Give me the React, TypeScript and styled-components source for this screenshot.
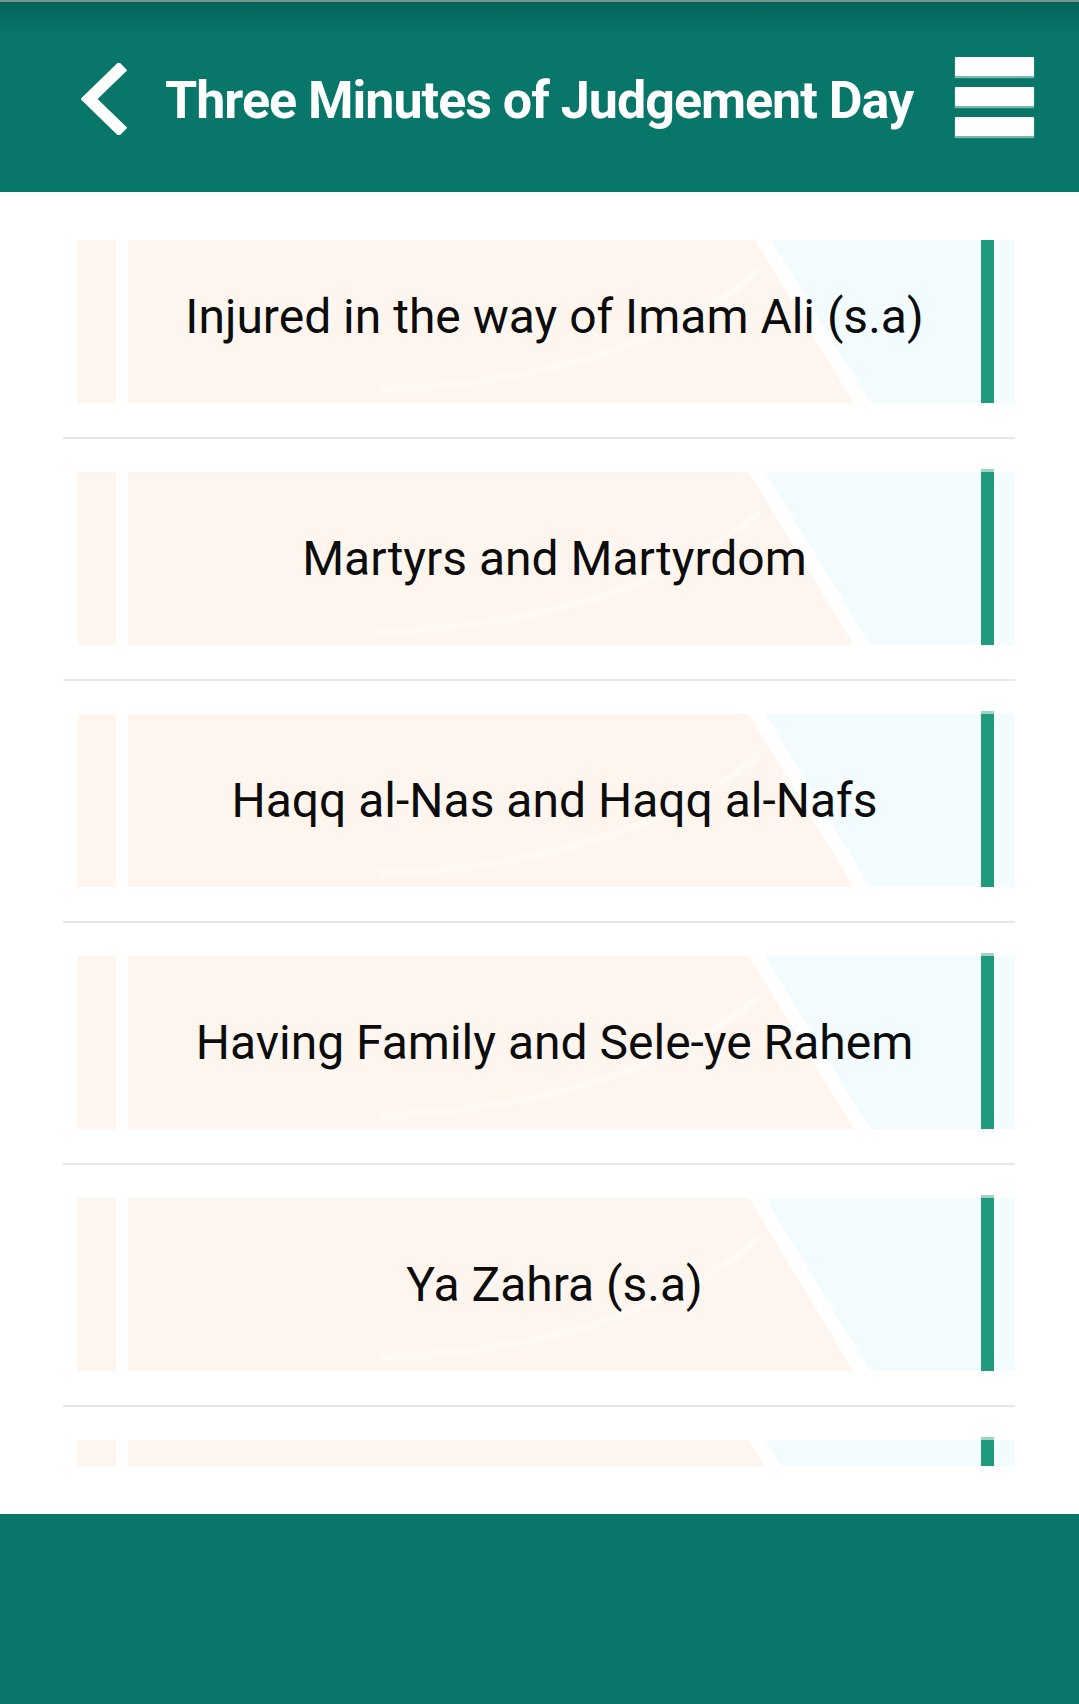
import styled, { createGlobalStyle } from "styled-components";

const GlobalStyle = createGlobalStyle`
    html, body {
        margin: 0;
        padding: 0;
    }
    body {
        font-family: Roboto, "Noto Sans", "Liberation Sans", sans-serif;
        background: #ffffff;
    }
`;

const Page = styled.div`
    display: flex;
    flex-direction: column;
    width: 1079px;
    height: 1704px;
    overflow: hidden;
`;

const Header = styled.header`
    display: flex;
    align-items: center;
    height: 192px;
    padding: 0 45px 0 81px;
    box-sizing: border-box;
    border-top: 2px solid #7d9190;
    background: linear-gradient(#05645a 0px, #08776a 34px, #08776a 100%);
    color: #ffffff;
`;

const BackBtn = styled.div`
    display: flex;
    align-items: center;
    width: 46px;
    height: 72px;
    margin-top: 4px;
`;

const Title = styled.h1`
    margin: 6px 0 0 38px;
    font-size: 52px;
    font-weight: 700;
    letter-spacing: -1px;
    white-space: nowrap;
`;

const Burger = styled.div`
    display: flex;
    flex-direction: column;
    gap: 11px;
    margin-left: auto;
    width: 79px;
    margin-top: -2px;

    span {
        display: block;
        height: 19px;
        background: #ffffff;
        box-shadow: 0 2px 1px rgba(170, 215, 205, 0.7);
    }
`;

const Main = styled.main`
    flex: 1;
    padding: 48px 0;
    background: #ffffff;
    overflow: hidden;
`;

const Viewport = styled.div`
    height: 100%;
    overflow: hidden;
`;

const List = styled.div`
    width: 952px;
    margin: -10px 0 0 63px;
`;

const Item = styled.div`
    display: flex;
    flex-direction: column;
`;

const Card = styled.div`
    display: flex;
    height: 173px;
    margin-left: 15px;
`;

const Stub = styled.div`
    width: 38px;
    background: #fef6ee;
    margin-right: 12px;
`;

const Panel = styled.div`
    position: relative;
    flex: 1;
    display: flex;
    padding-right: 21px;
    background: linear-gradient(
        58.75deg,
        #fef6ee 620px,
        #ffffff 621px,
        #ffffff 634px,
        #f2fbfd 635px
    );
`;

const Swoosh = styled.svg`
    position: absolute;
    left: 0;
    top: 0;
    pointer-events: none;
`;

const Label = styled.div`
    position: relative;
    flex: 1;
    display: flex;
    align-items: center;
    justify-content: center;
    font-size: 48px;
    font-weight: 400;
    color: #0c0c0c;
    white-space: nowrap;
`;

const Marker = styled.div`
    width: 13px;
    margin-top: -3px;
    background: #1f9a7d;
    border-top: 3px solid #9fd3c3;
    box-sizing: border-box;
`;

const Divider = styled.div`
    height: 2px;
    margin: 34px 0 33px;
    background: #e6e6e6;
`;

const Footer = styled.footer`
    height: 190px;
    background: #08776a;
`;

const topics = [
    "Injured in the way of Imam Ali (s.a)",
    "Martyrs and Martyrdom",
    "Haqq al-Nas and Haqq al-Nafs",
    "Having Family and Sele-ye Rahem",
    "Ya Zahra (s.a)",
    "",
];

function App() {
    return (
        <>
            <GlobalStyle />
            <Page>
                <Header>
                    <BackBtn>
                        <svg width="46" height="72" viewBox="0 0 46 72">
                            <polyline
                                points="42,3 8,36 42,69"
                                fill="none"
                                stroke="#ffffff"
                                strokeWidth="12"
                                strokeLinecap="butt"
                                strokeLinejoin="miter"
                            />
                        </svg>
                    </BackBtn>
                    <Title>Three Minutes of Judgement Day</Title>
                    <Burger>
                        <span />
                        <span />
                        <span />
                    </Burger>
                </Header>
                <Main>
                    <Viewport>
                        <List>
                            {topics.map((t, i) => (
                                <Item key={i}>
                                    <Card>
                                        <Stub />
                                        <Panel>
                                            <Swoosh width="640" height="173" viewBox="0 0 640 173">
                                                <path
                                                    d="M632 40 Q 500 150 250 160"
                                                    fill="none"
                                                    stroke="#ffffff"
                                                    strokeOpacity="0.3"
                                                    strokeWidth="7"
                                                />
                                            </Swoosh>
                                            <Label>{t}</Label>
                                            <Marker />
                                        </Panel>
                                    </Card>
                                    <Divider />
                                </Item>
                            ))}
                        </List>
                    </Viewport>
                </Main>
                <Footer />
            </Page>
        </>
    );
}

export default App;
